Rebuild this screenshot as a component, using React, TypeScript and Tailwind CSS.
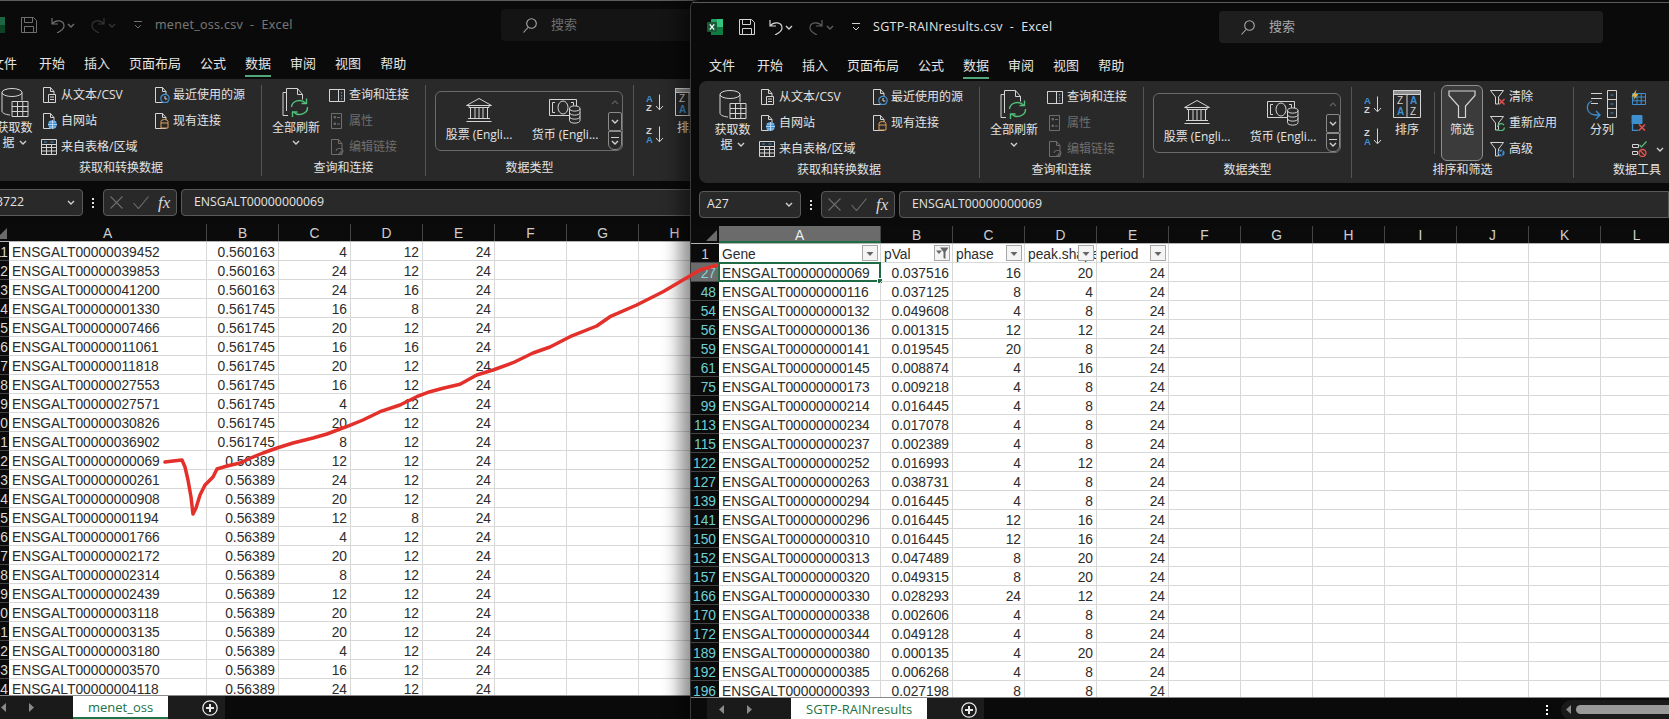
import React from "react";

type Row = [string, string, string, string, string];

const letters = "ABCDEFGHIJKLMN".split("");

const leftRows: Row[] = [
  ["13711", "00039452", "0.560163", "4", "12"],
  ["13712", "00039853", "0.560163", "24", "12"],
  ["13713", "00041200", "0.560163", "24", "16"],
  ["13714", "00001330", "0.561745", "16", "8"],
  ["13715", "00007466", "0.561745", "20", "12"],
  ["13716", "00011061", "0.561745", "16", "16"],
  ["13717", "00011818", "0.561745", "20", "12"],
  ["13718", "00027553", "0.561745", "16", "12"],
  ["13719", "00027571", "0.561745", "4", "12"],
  ["13720", "00030826", "0.561745", "20", "12"],
  ["13721", "00036902", "0.561745", "8", "12"],
  ["13722", "00000069", "0.56389", "12", "12"],
  ["13723", "00000261", "0.56389", "24", "12"],
  ["13724", "00000908", "0.56389", "20", "12"],
  ["13725", "00001194", "0.56389", "12", "8"],
  ["13726", "00001766", "0.56389", "4", "12"],
  ["13727", "00002172", "0.56389", "20", "12"],
  ["13728", "00002314", "0.56389", "8", "12"],
  ["13729", "00002439", "0.56389", "12", "12"],
  ["13730", "00003118", "0.56389", "20", "12"],
  ["13731", "00003135", "0.56389", "20", "12"],
  ["13732", "00003180", "0.56389", "4", "12"],
  ["13733", "00003570", "0.56389", "16", "12"],
  ["13734", "00004118", "0.56389", "24", "12"],
];

const rightRows: Row[] = [
  ["27", "00000069", "0.037516", "16", "20"],
  ["48", "00000116", "0.037125", "8", "4"],
  ["54", "00000132", "0.049608", "4", "8"],
  ["56", "00000136", "0.001315", "12", "12"],
  ["59", "00000141", "0.019545", "20", "8"],
  ["61", "00000145", "0.008874", "4", "16"],
  ["75", "00000173", "0.009218", "4", "8"],
  ["99", "00000214", "0.016445", "4", "8"],
  ["113", "00000234", "0.017078", "4", "8"],
  ["115", "00000237", "0.002389", "4", "8"],
  ["122", "00000252", "0.016993", "4", "12"],
  ["127", "00000263", "0.038731", "4", "8"],
  ["139", "00000294", "0.016445", "4", "8"],
  ["141", "00000296", "0.016445", "12", "16"],
  ["150", "00000310", "0.016445", "12", "16"],
  ["152", "00000313", "0.047489", "8", "20"],
  ["157", "00000320", "0.049315", "8", "20"],
  ["166", "00000330", "0.028293", "24", "12"],
  ["170", "00000338", "0.002606", "4", "8"],
  ["172", "00000344", "0.049128", "4", "8"],
  ["189", "00000380", "0.000135", "4", "20"],
  ["192", "00000385", "0.006268", "4", "8"],
  ["196", "00000393", "0.027198", "8", "8"],
];

const redLine =
  "165,462 173,461 182,460 185,467 188,480 191,497 193,514 196,508 200,495 205,485 213,477 217,469 227,466 240,463 253,457 263,453 277,448 293,443 313,438 327,434 340,429 346.7,426.7 363,420 380,411.7 400,405 416.7,396.7 430,391.7 443,388.3 460,384.3 476.7,375 493,370 513,362.7 533,353 550,347 570,336.7 596.7,326 610,316.7 636.7,305 663,291.7 683,280 700,270 716.7,265.3";

const LINE = "#d4d4d4";
const BLUE = "#3f8fd0";
const GREEN = "#52c27a";
const RED = "#e0524f";
const ORANGE = "#dfa055";

const Svg = ({
  w,
  h,
  children,
  stroke = LINE,
}: {
  w: number;
  h: number;
  children: React.ReactNode;
  stroke?: string;
}) => (
  <svg width={w} height={h} viewBox={`0 0 ${w} ${h}`} fill="none" stroke={stroke} strokeWidth="1" className="shrink-0 block">
    {children}
  </svg>
);

const Chevron = ({ color = "#d0d0d0" }: { color?: string }) => (
  <svg width="8" height="5" viewBox="0 0 8 5" fill="none" stroke={color} strokeWidth="1.4" className="shrink-0">
    <path d="M1 1l3 3 3-3" />
  </svg>
);

const Doc = () => (
  <>
    <path d="M2.5 .5h7l3.5 4v11h-10.5z" />
    <path d="M9.5 .5v4h3.5" />
  </>
);

const FromTextIcon = () => (
  <Svg w={18} h={16}>
    <Doc />
    <path d="M7.5 7.5h7v8h-7zM9 10h4M9 12.5h4" fill="#292929" />
  </Svg>
);
const WebIcon = () => (
  <Svg w={18} h={16}>
    <Doc />
    <circle cx="11.5" cy="11.5" r="4.5" fill={BLUE} stroke="none" />
    <path d="M7 11.5h9M11.5 7v9M8 9h7M8 14h7" stroke="#dbe9f5" strokeWidth=".7" />
  </Svg>
);
const RecentIcon = () => (
  <Svg w={18} h={16}>
    <Doc />
    <circle cx="12" cy="11.5" r="4.2" fill="#292929" stroke={BLUE} strokeWidth="1.2" />
    <path d="M12 9v3h2.4" stroke={LINE} />
  </Svg>
);
const ExistingIcon = () => (
  <Svg w={18} h={16}>
    <Doc />
    <path d="M8 8.5a3.5 2 0 0 1 7 0v6.5h-7z" fill="#292929" stroke={ORANGE} />
    <path d="M8 10h7" stroke={ORANGE} />
  </Svg>
);
const TableIcon = () => (
  <Svg w={18} h={16}>
    <path d="M.5.5h15v15H.5zM.5 5.5h15M.5 8.5h15M.5 12h15M5.5 5.5v10M10.5 5.5v10" />
    <path d="M3 3h3M9.5 3h3" stroke={BLUE} />
  </Svg>
);
const QueryPaneIcon = () => (
  <Svg w={18} h={16}>
    <path d="M.5 2.5h15v12H.5zM9.5 2.5v12M.5 2.5h15" />
    <path d="M12.5 5v1.5M12.5 8v1.5M12.5 11v1.5" stroke={BLUE} strokeWidth="1.3" />
  </Svg>
);
const PropsIcon = () => (
  <Svg w={18} h={16} stroke="#6e6e6e">
    <path d="M2.5.5h10v15h-10zM8 4.5h3M8 11h3" />
    <path d="M5 3.5h1.5V5H5zM5 10h1.5v1.500H5z" />
  </Svg>
);
const EditLinksIcon = () => (
  <Svg w={18} h={16} stroke="#6e6e6e">
    <Doc />
    <path d="M7 12a2.500 2.500 0 0 1 2.500-2.500h2a2.500 2.500 0 0 1 0 5M12 12a2.500 2.500 0 0 1-2.500 2.500" />
  </Svg>
);
const Funnel = () => <path d="M1.500 1.500h13l-5 6.500v7h-3V8z" />;
const ClearIcon = () => (
  <Svg w={18} h={16}>
    <Funnel />
    <path d="M10 10l5.500 5.500M15.500 10L10 15.500" stroke={RED} strokeWidth="1.500" />
  </Svg>
);
const ReapplyIcon = () => (
  <Svg w={18} h={16}>
    <Funnel />
    <path d="M8.500 12a3.700 3.700 0 0 1 6.500-2M15.500 12.500a3.700 3.700 0 0 1-6.500 2" stroke={GREEN} strokeWidth="1.300" />
  </Svg>
);
const AdvancedIcon = () => (
  <Svg w={18} h={16}>
    <Funnel />
    <circle cx="12" cy="12" r="2.600" stroke={BLUE} strokeWidth="2" strokeDasharray="2.500 1" />
  </Svg>
);
const FlashIcon = () => (
  <Svg w={18} h={16}>
    <path d="M2.500 4.500h13v11h-13zM2.500 8h13M2.500 11.800h13M7 4.500v11M11.200 4.500v11" stroke={BLUE} />
    <path d="M6.500.5L1.500 7.500h3L3 11.500l5.500-6.500H5.500z" fill="#e3b53f" stroke="none" />
  </Svg>
);
const DupIcon = () => (
  <Svg w={18} h={16}>
    <path d="M2 .5h10v4H2zM2 4.500h10v4H2z" fill={BLUE} stroke={BLUE} />
    <path d="M2.500 8.500v7h6" stroke={BLUE} strokeWidth="1.300" />
    <path d="M9 9.500l6 6M15 9.500l-6 6" stroke={RED} strokeWidth="1.600" />
  </Svg>
);
const ValidateIcon = () => (
  <Svg w={18} h={16}>
    <path d="M2.500 3.500h6v3h-6zM2.500 10.500h5v3h-5z" />
    <path d="M9.500 4l2 2 5-5.500" stroke={GREEN} strokeWidth="1.200" />
    <circle cx="12.500" cy="12" r="3.500" stroke={RED} strokeWidth="1.300" />
    <path d="M10 9.500l5 5" stroke={RED} strokeWidth="1.300" />
  </Svg>
);

const GetDataIcon = () => (
  <Svg w={28} h={30}>
    <ellipse cx="11" cy="4.500" rx="10" ry="4" />
    <path d="M1 4.500v18.500c0 2 3 3.500 8 4M21 4.500v8" />
    <path d="M11 13.500h16v15H11zM11 18.500h16M11 23.500h16M16.500 13.500v15M21.800 13.500v15" fill="#292929" />
  </Svg>
);
const RefreshAllIcon = () => (
  <Svg w={28} h={30}>
    <path d="M4.500 4.500H1v23h5M4.500 23V.5h11l5 6v5" />
    <path d="M15.500.5v6h5" />
    <path d="M9.500 19a8 7 0 0 1 14-4M25.500 19a8 7 0 0 1-14 5" stroke={GREEN} strokeWidth="1.400" />
    <path d="M24.500 10.500v5h-5M10.500 29v-5h5" stroke={GREEN} strokeWidth="1.400" />
  </Svg>
);
const BankIcon = () => (
  <Svg w={28} h={24}>
    <path d="M14 .5L1.500 7.500h25zM4 8v1.500h20V8M5.500 9.500v11M10 9.500v11M14 9.500v11M18 9.500v11M22.500 9.500v11M3 20.500h22M1.500 23.500h25" />
  </Svg>
);
const CurrencyIcon = () => (
  <Svg w={32} h={26}>
    <path d="M.5 1.500h27v16H.5zM6 4.500H3.500v10H6M22 4.500h2.500v3" />
    <ellipse cx="14" cy="9.500" rx="5" ry="6.500" />
    <path d="M20.500 10.500c0-3.500 10.500-3.500 10.500 0v12c0 3.500-10.500 3.500-10.500 0z" fill="#292929" />
    <path d="M20.500 10.500c0 3.500 10.500 3.500 10.500 0M20.500 14.500c0 3.500 10.500 3.500 10.500 0M20.500 18.500c0 3.500 10.500 3.500 10.500 0" />
  </Svg>
);
const SortSmall = ({ top, bottom, topBlue }: { top: string; bottom: string; topBlue: boolean }) => (
  <svg width="18" height="17" viewBox="0 0 18 17" fill="none" className="shrink-0 block">
    <text x="0" y="8" fontSize="9.500" fontFamily="Liberation Sans" fontWeight="700" fill={topBlue ? BLUE : LINE}>
      {top}
    </text>
    <text x="0" y="16.500" fontSize="9.500" fontFamily="Liberation Sans" fontWeight="700" fill={topBlue ? LINE : BLUE}>
      {bottom}
    </text>
    <path d="M13.500 .5v15M10 12l3.500 3.800L17 12" stroke={LINE} />
  </svg>
);
const SortBigIcon = () => (
  <svg width="28" height="28" viewBox="0 0 28 28" fill="none" stroke={LINE} className="shrink-0 block">
    <path d="M.5.5h27v27H.5zM14 4.500v23" />
    <rect x=".5" y=".5" width="27" height="4" fill="#8f8f8f" />
    <g stroke="none" fontFamily="Liberation Sans" fontSize="10">
      <text x="4" y="14" fill={LINE}>Z</text>
      <text x="4" y="25" fill={BLUE} fontWeight="700">A</text>
      <text x="17" y="14" fill={BLUE} fontWeight="700">A</text>
      <text x="17" y="25" fill={LINE}>Z</text>
    </g>
  </svg>
);
const FilterBigIcon = () => (
  <Svg w={28} h={28}>
    <path d="M1 1h26v4.500L17.500 16v11.500h-7V16L1 5.500z" strokeWidth="1.200" />
  </Svg>
);
const SplitIcon = () => (
  <Svg w={32} h={30}>
    <path d="M5 3.500h11M5 8.500h11M5 13.500h7" />
    <path d="M21.500.5h9v9h-9zM21.500 9.500h9v9h-9zM21.500 18.500h9v9h-9z" />
    <path d="M24.500 5h3M24.500 14h3M24.500 23h3" stroke={BLUE} strokeWidth="1.200" />
    <path d="M6 11C-1 14 0 24 9 25h4M10 21l4 4-4 4" stroke={BLUE} strokeWidth="1.300" />
  </Svg>
);

const ExcelIcon = () => (
  <svg width="16" height="16" viewBox="0 0 16 16" className="shrink-0 block">
    <rect x="4" y="0" width="12" height="16" rx="1" fill="#21a366" />
    <rect x="10" y="0" width="6" height="8" fill="#33c481" />
    <rect x="4" y="8" width="12" height="8" fill="#107c41" />
    <rect x="0" y="3" width="10" height="10" rx="1" fill="#185c37" />
    <path d="M2.800 5.300l4.400 5.400M7.200 5.300l-4.400 5.400" stroke="#fff" strokeWidth="1.300" />
  </svg>
);
const SaveIcon = () => (
  <Svg w={16} h={16}>
    <path d="M.5.500h12l3 3v12H.5zM3.500.500v5h8v-5M3.500 15.500v-6h9v6" />
  </Svg>
);
const UndoIcon = ({ dim }: { dim?: boolean }) => (
  <Svg w={15} h={16} stroke={dim ? "#5e5e5e" : LINE}>
    <path d="M2 1v6h6M2 7c4-5 12-4 12 2 0 3-3 5-7 7" strokeWidth="1.200" />
  </Svg>
);
const RedoIcon = () => (
  <Svg w={15} h={16} stroke="#5e5e5e">
    <path d="M13 1v6H7M13 7C9 2 1 3 1 9c0 3 3 5 7 7" strokeWidth="1.200" />
  </Svg>
);
const QatIcon = () => (
  <svg width="8" height="8" viewBox="0 0 8 8" fill="none" stroke={LINE} className="shrink-0 block">
    <path d="M0 .5h8M1 4l3 3 3-3" />
  </svg>
);
const SearchIcon = () => (
  <svg width="14" height="15" viewBox="0 0 14 15" fill="none" stroke="#a8a8a8" strokeWidth="1.100" className="shrink-0 block">
    <circle cx="8.500" cy="5.500" r="4.800" />
    <path d="M5 9.500L.5 14.500" />
  </svg>
);
const FilterGlyph = ({ applied }: { applied?: boolean }) => (
  <svg width="14" height="15" viewBox="0 0 14 15" fill="#666" className="block">
    {applied ? (
      <>
        <path d="M1 4.500h6L4 8z" />
        <path d="M5 1.500h8.500L10.500 6v7l-2-1V6z" />
      </>
    ) : (
      <path d="M3.500 6h7L7 10z" />
    )}
  </svg>
);
const Triangle = ({ flip }: { flip?: boolean }) => (
  <svg width="5" height="9" viewBox="0 0 5 9" fill="#8a8a8a" className={flip ? "rotate-180" : ""}>
    <path d="M5 0v9L0 4.500z" />
  </svg>
);
const PlusCircle = () => (
  <svg width="16" height="16" viewBox="0 0 16 16" fill="none" stroke="#e8e8e8" className="shrink-0 block">
    <circle cx="8" cy="8" r="7.200" strokeWidth="1.300" />
    <path d="M4 8h8M8 4v8" strokeWidth="2" />
  </svg>
);

const Small = ({ icon, label, disabled }: { icon: React.ReactNode; label: string; disabled?: boolean }) => (
  <div className={`flex h-[26px] items-center gap-[2px] whitespace-nowrap text-[12px] ${disabled ? "text-[#6e6e6e]" : ""}`}>
    {icon}
    <span>{label}</span>
  </div>
);

const Group = ({ label, className, children }: { label: string; className: string; children: React.ReactNode }) => (
  <div className={`flex shrink-0 flex-col ${className}`}>
    <div className="flex h-[78px]">{children}</div>
    <div className="h-[16px] text-center text-[12px] leading-[16px]">{label}</div>
  </div>
);

const Sep = () => <div className="mt-[3px] h-[91px] w-px shrink-0 bg-[#555]" />;

const BigLabel = ({ children }: { children: React.ReactNode }) => (
  <div className="mt-[2px] text-center text-[12px] leading-[15px]">{children}</div>
);

const Ribbon = () => (
  <div className="ml-[8px] flex h-[102px] rounded-l-lg bg-[#292929] pt-[3px] text-[#e2e2e2]">
    <Group label="获取和转换数据" className="w-[280px]">
      <div className="ml-[7px] flex w-[53px] flex-col items-center pt-[6px]">
        <GetDataIcon />
        <BigLabel>
          获取数
          <div className="flex items-center justify-center gap-[4px]">
            据 <Chevron />
          </div>
        </BigLabel>
      </div>
      <div className="w-[112px]">
        <Small icon={<FromTextIcon />} label="从文本/CSV" />
        <Small icon={<WebIcon />} label="自网站" />
        <Small icon={<TableIcon />} label="来自表格/区域" />
      </div>
      <div>
        <Small icon={<RecentIcon />} label="最近使用的源" />
        <Small icon={<ExistingIcon />} label="现有连接" />
      </div>
    </Group>
    <Sep />
    <Group label="查询和连接" className="w-[163px]">
      <div className="ml-[4px] flex w-[60px] flex-col items-center pt-[6px]">
        <RefreshAllIcon />
        <BigLabel>
          全部刷新
          <div className="flex h-[15px] items-center justify-center">
            <Chevron />
          </div>
        </BigLabel>
      </div>
      <div className="ml-[3px]">
        <Small icon={<QueryPaneIcon />} label="查询和连接" />
        <Small icon={<PropsIcon />} label="属性" disabled />
        <Small icon={<EditLinksIcon />} label="编辑链接" disabled />
      </div>
    </Group>
    <Sep />
    <Group label="数据类型" className="w-[207px]">
      <div className="ml-[9px] mt-[9px] flex h-[60px] w-[188px] rounded-md border border-[#6a6a6a]">
        <div className="flex w-[86px] flex-col items-center pt-[6px]">
          <BankIcon />
          <div className="mt-[5px] whitespace-nowrap text-[12px] leading-[16px]">股票 (Engli...</div>
        </div>
        <div className="flex w-[86px] flex-col items-center pt-[6px]">
          <div className="h-[24px]">
            <CurrencyIcon />
          </div>
          <div className="mt-[5px] whitespace-nowrap text-[12px] leading-[16px]">货币 (Engli...</div>
        </div>
        <div className="flex w-[14px] flex-col">
          <div className="flex h-[20px] items-center justify-center">
            <svg width="8" height="5" viewBox="0 0 8 5" fill="none" stroke="#606060" strokeWidth="1.200">
              <path d="M1 4l3-3 3 3" />
            </svg>
          </div>
          <div className="flex h-[19px] items-center justify-center rounded-[2px] border border-[#8a8a8a]">
            <Chevron />
          </div>
          <div className="flex h-[19px] flex-col items-center justify-center gap-[2px] rounded-b-md border border-[#8a8a8a]">
            <div className="h-px w-[8px] bg-[#d0d0d0]" />
            <Chevron />
          </div>
        </div>
      </div>
    </Group>
    <Sep />
    <Group label="排序和筛选" className="w-[221px]">
      <div className="ml-[12px] flex w-[18px] flex-col gap-[15px] pt-[12px]">
        <SortSmall top="A" bottom="Z" topBlue />
        <SortSmall top="Z" bottom="A" topBlue={false} />
      </div>
      <div className="ml-[11px] flex w-[28px] flex-col items-center pt-[6px]">
        <SortBigIcon />
        <div className="mt-[4px] text-[12px] leading-[16px] whitespace-nowrap">排序</div>
      </div>
      <div className="ml-[13px] mt-[8px] h-[62px] w-px bg-[#555]" />
      <div className="ml-[6px] mt-px flex h-[76px] w-[42px] flex-col items-center rounded-md border border-[#8f8f8f] bg-[#3b3b3b] pt-[4px]">
        <FilterBigIcon />
        <div className="mt-[4px] text-[12px] leading-[16px]">筛选</div>
      </div>
      <div className="ml-[6px]">
        <Small icon={<ClearIcon />} label="清除" />
        <Small icon={<ReapplyIcon />} label="重新应用" />
        <Small icon={<AdvancedIcon />} label="高级" />
      </div>
    </Group>
    <Sep />
    <Group label="数据工具" className="w-[126px]">
      <div className="ml-[12px] flex w-[32px] flex-col items-center pt-[6px]">
        <SplitIcon />
        <div className="mt-[2px] whitespace-nowrap text-[12px] leading-[16px]">分列</div>
      </div>
      <div className="ml-[12px]">
        <div className="flex h-[26px] items-center">
          <FlashIcon />
        </div>
        <div className="flex h-[26px] items-center">
          <DupIcon />
        </div>
        <div className="flex h-[26px] items-center gap-[8px]">
          <ValidateIcon />
          <Chevron />
        </div>
      </div>
    </Group>
  </div>
);

const Grid = ({
  rows,
  headerWidth,
  colA,
  hasHeader,
}: {
  rows: Row[];
  headerWidth: string;
  colA: string;
  hasHeader: boolean;
}) => {
  const heads = ["Gene", "pVal", "phase", "peak.shape", "period"];
  return (
    <div className="flex-1 overflow-hidden bg-white font-['Liberation_Sans',sans-serif] text-[13.8px] leading-[22px] text-[#2c2c2c]">
      <div className="flex h-[18px] border-b border-[#b4b4b4] bg-[#0b0b0b] leading-[20px] text-[#cfcfcf]">
        <div className={`flex shrink-0 items-end justify-end pb-[2px] pr-[2px] ${headerWidth}`}>
          <div className="h-0 w-0 border-b-[11px] border-l-[11px] border-b-[#6a6a6a] border-l-transparent" />
        </div>
        {letters.map((l, i) => (
          <div
            key={l}
            className={`shrink-0 border-r border-[#444] text-center ${i === 0 ? colA : "w-[72px]"} ${
              i === 0 && hasHeader ? "border-b-2 border-b-[#1f6b45] bg-[#6b6b6b] text-[#eee]" : ""
            }`}
          >
            {l}
          </div>
        ))}
      </div>
      {hasHeader && (
        <div className="flex h-[19px]">
          <div className={`shrink-0 border-b border-[#444] bg-[#0b0b0b] text-center text-[#cfcfcf] ${headerWidth}`}>1</div>
          {letters.map((l, i) => (
            <div
              key={l}
              className={`relative shrink-0 overflow-hidden border-b border-r border-[#d8d8d8] pl-[3px] ${i === 0 ? colA : "w-[72px]"}`}
            >
              {heads[i]}
              {i < 5 && (
                <div className="absolute right-[2px] top-[1px] h-[16px] w-[16px] border border-[#a8a8a8] bg-[#f4f4f4]">
                  <FilterGlyph applied={i === 1} />
                </div>
              )}
            </div>
          ))}
        </div>
      )}
      {rows.map((r, idx) => {
        const cells = [`ENSGALT000${r[1]}`, r[2], r[3], r[4], "24"];
        const picked = hasHeader && idx === 0;
        return (
          <div key={r[0]} className="flex h-[19px]">
            <div
              className={`flex shrink-0 justify-end overflow-hidden whitespace-nowrap border-b border-[#444] ${headerWidth} ${
                picked ? "bg-[#6b6b6b] text-[#7fd8dc]" : "bg-[#0b0b0b]"
              } ${hasHeader ? "pr-[3px] text-[#6fd0d4]" : "pr-[1px] text-[#d8d8d8]"}`}
            >
              {r[0]}
            </div>
            {letters.map((l, i) => (
              <div
                key={l}
                className={`relative shrink-0 whitespace-nowrap border-b border-r border-[#d8d8d8] ${i === 0 ? `pl-[3px] ${colA}` : "w-[72px] pr-[3px] text-right"}`}
              >
                {cells[i] ?? ""}
                {picked && i === 0 && (
                  <div className="absolute inset-[-1px] border-2 border-[#1f6b45]">
                    <div className="absolute -bottom-[4px] -right-[4px] h-[6px] w-[6px] border border-white bg-[#1f6b45]" />
                  </div>
                )}
              </div>
            ))}
          </div>
        );
      })}
    </div>
  );
};

const ExcelWindow = ({
  className,
  title,
  cellRef,
  sheet,
  rows,
  active,
  headerWidth,
  colA,
}: {
  className: string;
  title: string;
  cellRef: string;
  sheet: string;
  rows: Row[];
  active: boolean;
  headerWidth: string;
  colA: string;
}) => (
  <div
    className={`absolute flex h-[721px] flex-col overflow-hidden bg-[#0a0a0a] font-['Open_Sans','Noto_Sans_CJK_SC',sans-serif] ${className}`}
  >
    <div className="h-[3px] border-b border-[#5c5c5c]" />
    <div className="flex h-[48px] items-center">
      <div className={`flex w-[528px] shrink-0 items-center pl-[16px] ${active ? "" : "opacity-50"}`}>
        <ExcelIcon />
        <div className="ml-[16px]">
          <SaveIcon />
        </div>
        <div className="ml-[13px] flex items-center gap-[2px]">
          <UndoIcon />
          <Chevron />
        </div>
        <div className="ml-[16px] flex items-center gap-[2px]">
          <RedoIcon />
          <Chevron color="#5e5e5e" />
        </div>
        <div className="ml-[18px]">
          <QatIcon />
        </div>
        <div className="ml-[13px] whitespace-pre text-[12.5px] tracking-[0.3px] text-[#e4e4e4]">{title}  -  Excel</div>
      </div>
      <div
        className={`flex h-[32px] w-[384px] shrink-0 items-center gap-[14px] rounded-[4px] pl-[22px] text-[13px] ${
          active ? "bg-[#1e1e1e] text-[#a8a8a8]" : "bg-[#141414] text-[#6e6e6e]"
        }`}
      >
        <SearchIcon />
        搜索
      </div>
    </div>
    <div className="flex h-[30px] items-center gap-[19px] pl-[18px] text-[13px] text-[#e4e4e4]">
      {["文件", "开始", "插入", "页面布局", "公式", "数据", "审阅", "视图", "帮助"].map((t, i) => (
        <div key={t} className={`relative ${i === 0 ? "mr-[3px]" : ""}`}>
          {t}
          {t === "数据" && <div className="absolute -bottom-[3px] left-0 right-0 h-[2px] bg-[#4fa77a]" />}
        </div>
      ))}
    </div>
    <Ribbon />
    <div className="flex h-[43px] pb-[8px] pt-[8px] text-[12.300px] text-[#e4e4e4]">
      <div className="ml-[8px] flex w-[102px] shrink-0 items-center justify-between rounded-[4px] border border-[#5a5a5a] bg-[#292929] px-[7px]">
        {cellRef}
        <Chevron />
      </div>
      <div className="flex w-[20px] shrink-0 flex-col items-center justify-center gap-[2px]">
        <div className="h-[2px] w-[2px] bg-[#e0e0e0]" />
        <div className="h-[2px] w-[2px] bg-[#e0e0e0]" />
        <div className="h-[2px] w-[2px] bg-[#e0e0e0]" />
      </div>
      <div className="flex w-[74px] shrink-0 items-center rounded-[4px] border border-[#5a5a5a] bg-[#292929] pl-[6px]">
        <svg width="13" height="13" viewBox="0 0 13 13" stroke="#6e6e6e" strokeWidth="1.100" className="block shrink-0">
          <path d="M.5.5l12 12M12.500.5l-12 12" />
        </svg>
        <svg width="16" height="13" viewBox="0 0 16 13" fill="none" stroke="#6e6e6e" strokeWidth="1.100" className="ml-[10px] block shrink-0">
          <path d="M.5 7l5 5.500L15.500.5" />
        </svg>
        <span className="ml-[9px] font-['Liberation_Serif',serif] text-[17px] italic leading-none text-[#d8d8d8]">fx</span>
      </div>
      <div className="ml-[4px] flex flex-1 items-center rounded-l-[4px] border border-[#5a5a5a] bg-[#292929] pl-[12px]">
        ENSGALT00000000069
      </div>
    </div>
    <Grid rows={rows} headerWidth={headerWidth} colA={colA} hasHeader={active} />
    <div className="flex h-[24px] shrink-0 border-t border-[#8a8a8a] bg-[#0a0a0a]">
      <div className="ml-[16px] flex w-[84px] items-center gap-[23px] bg-[#1a1a1a] pl-[12px]">
        <Triangle />
        <Triangle flip />
      </div>
      <div className="border-b-2 border-[#217346] bg-white px-[15px] text-[13px] leading-[22px] text-[#217346]">{sheet}</div>
      <div className="flex w-[57px] items-center justify-end bg-[#1c1c1c] pr-[7px]">
        <PlusCircle />
      </div>
      {active && (
        <div className="ml-auto flex items-center">
          <div className="flex flex-col gap-[2px]">
            <div className="h-[2px] w-[2px] bg-white" />
            <div className="h-[2px] w-[2px] bg-white" />
            <div className="h-[2px] w-[2px] bg-white" />
          </div>
          <div className="ml-[13px] flex h-[20px] w-[108px] items-center gap-[5px] rounded-l-full bg-[#1a1a1a] pl-[5px]">
            <Triangle />
            <div className="h-[9px] flex-1 rounded-l-full bg-[#9a9a9a]" />
          </div>
        </div>
      )}
    </div>
  </div>
);

export default function App() {
  return (
    <div className="relative h-[719px] w-[1669px] overflow-hidden bg-[#333]">
      <ExcelWindow
        className="-top-[2px] left-[-27px] w-[720px]"
        title="menet_oss.csv"
        cellRef="13722"
        sheet="menet_oss"
        rows={leftRows}
        active={false}
        headerWidth="w-[36px]"
        colA="w-[198px]"
      />
      <ExcelWindow
        className="left-[690px] top-0 w-[979px] rounded-tl-lg border-l border-[#3a3a3a] shadow-[-10px_0_18px_rgba(0,0,0,0.45)]"
        title="SGTP-RAINresults.csv"
        cellRef="A27"
        sheet="SGTP-RAINresults"
        rows={rightRows}
        active
        headerWidth="w-[28px]"
        colA="w-[162px]"
      />
      <svg className="pointer-events-none absolute inset-0" width="1669" height="719" viewBox="0 0 1669 719" fill="none">
        <polyline points={redLine} stroke="#e3302b" strokeWidth="3.5" strokeLinejoin="round" strokeLinecap="round" />
      </svg>
    </div>
  );
}
